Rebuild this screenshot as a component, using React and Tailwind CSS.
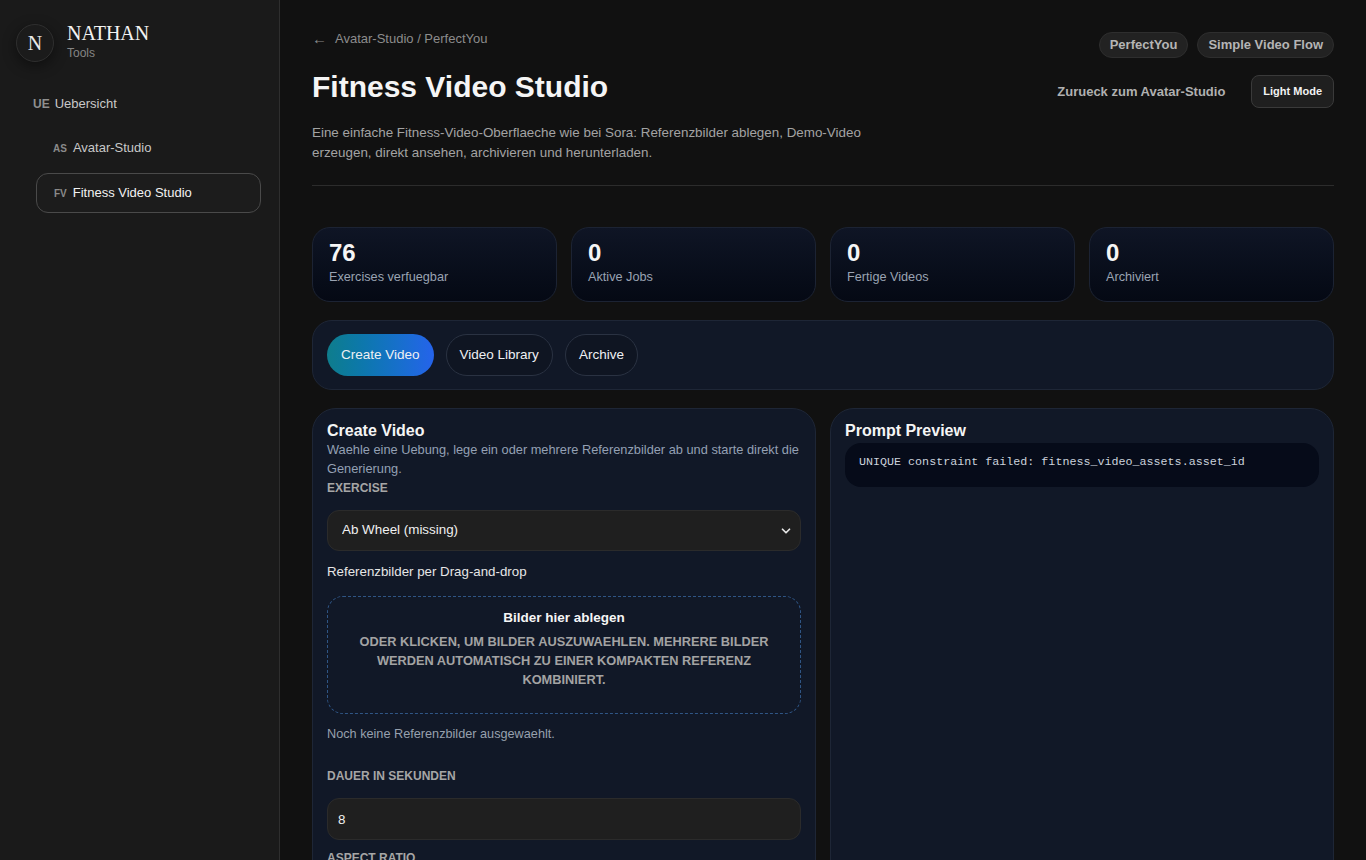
import React, { useState } from 'react';
import { ChevronDown } from 'lucide-react';
import clsx from 'clsx';

const stats = [
  { value: '76', label: 'Exercises verfuegbar' },
  { value: '0', label: 'Aktive Jobs' },
  { value: '0', label: 'Fertige Videos' },
  { value: '0', label: 'Archiviert' },
];

const tabs = ['Create Video', 'Video Library', 'Archive'];

function Sidebar() {
  return (
    <aside className="w-[280px] shrink-0 bg-[#1a1a1a] border-r border-[#2e2e2e] min-h-screen pl-4 pr-[18px] pt-5">
      {/* Brand */}
      <div className="flex items-center gap-[13px]">
        <div className="w-[38px] h-[38px] rounded-full border border-[#2f2f2f] bg-[#1b1b1b] shadow-[0_4px_14px_rgba(0,0,0,0.45)] flex items-center justify-center text-[20px] text-[#e8e8e8] font-['Liberation_Serif',serif] mt-1">
          N
        </div>
        <div>
          <div className="text-[20px] leading-6 text-[#f2f2f2] font-['Liberation_Serif',serif]">NATHAN</div>
          <div className="text-[12px] leading-4 text-[#858585]">Tools</div>
        </div>
      </div>

      {/* Nav */}
      <nav className="mt-[22px] flex flex-col gap-1">
        <div className="h-10 flex items-center gap-[5px] px-[17px] text-[13px] text-[#c8c8c8]">
          <span className="text-[12px] font-bold text-[#8f8f8f]">UE</span>
          Uebersicht
        </div>
        <div className="ml-5 flex flex-col gap-[5px]">
          <div className="h-10 flex items-center gap-[6px] px-[17px] text-[13px] text-[#c8c8c8]">
            <span className="text-[10px] font-bold text-[#8a8a8a]">AS</span>
            Avatar-Studio
          </div>
          <div className="h-10 flex items-center gap-[6px] px-[17px] text-[13px] text-[#f2f2f2] border border-[#4a4a4a] rounded-xl bg-[#1c1c1c]">
            <span className="text-[10px] font-bold text-[#8a8a8a]">FV</span>
            Fitness Video Studio
          </div>
        </div>
      </nav>
    </aside>
  );
}

function StatCard({ value, label }) {
  return (
    <div className="rounded-[18px] border border-[#1c2333] bg-linear-to-b from-[#0f1525] to-[#050914] px-4 pt-[11px] pb-[14px]">
      <div className="text-[24px] leading-7 font-bold text-[#f5f5f5]">{value}</div>
      <div className="text-[12.7px] leading-5 text-[#9aa3b2]">{label}</div>
    </div>
  );
}

function FieldLabel({ children, className }) {
  return (
    <div className={clsx('text-[12px] leading-4 font-bold uppercase text-[#a6a6a6]', className)}>
      {children}
    </div>
  );
}

function SelectBox({ value }) {
  return (
    <div className="relative mt-[14px]">
      <select className="w-full h-[41px] appearance-none rounded-xl bg-[#1f1f1f] border border-[#2b2b2b] pl-[14px] pr-8 text-[13.4px] text-[#f0f0f0] outline-none">
        <option>{value}</option>
      </select>
      <ChevronDown size={14} strokeWidth={3} className="absolute right-[8px] top-1/2 -translate-y-1/2 text-[#e5e5e5] pointer-events-none" />
    </div>
  );
}

function CreatePanel() {
  return (
    <section className="rounded-[24px] border border-[#1e2636] bg-[#111827] px-[14px] pt-3 pb-6">
      <h2 className="text-[16px] leading-[19px] font-bold text-[#f5f5f5]">Create Video</h2>
      <p className="text-[12.8px] leading-[19px] text-[#94a0b4]">
        Waehle eine Uebung, lege ein oder mehrere Referenzbilder ab und starte direkt die Generierung.
      </p>
      <FieldLabel className="mt-[2px]">Exercise</FieldLabel>
      <SelectBox value="Ab Wheel (missing)" />

      <div className="mt-[11px] text-[13.3px] leading-5 text-[#e6e6e6]">Referenzbilder per Drag-and-drop</div>
      <div className="mt-[14px] rounded-2xl border border-dashed border-[#2f5585] px-6 pt-[11px] pb-6 text-center">
        <div className="text-[13.5px] leading-5 font-bold text-[#f5f5f5]">Bilder hier ablegen</div>
        <div className="mt-1 text-[12.8px] leading-[19px] font-bold uppercase text-[#a3a3a3]">
          Oder klicken, um Bilder auszuwaehlen. Mehrere Bilder werden automatisch zu einer kompakten Referenz kombiniert.
        </div>
      </div>
      <div className="mt-[10px] text-[12.7px] leading-5 text-[#97a0ae]">Noch keine Referenzbilder ausgewaehlt.</div>

      <FieldLabel className="mt-6">Dauer in Sekunden</FieldLabel>
      <input
        defaultValue="8"
        className="mt-[14px] w-full h-[42px] rounded-xl bg-[#1f1f1f] border border-[#2b2b2b] px-[10px] text-[13.4px] text-[#f0f0f0] outline-none"
      />

      <FieldLabel className="mt-[10px]">Aspect Ratio</FieldLabel>
      <SelectBox value="9:16 (Hochformat)" />

      <button className="mt-5 w-full h-[42px] rounded-full bg-linear-to-r from-[#0f7d8c] to-[#2563eb] text-[13.5px] font-semibold text-white">
        Video generieren
      </button>
    </section>
  );
}

function PreviewPanel() {
  return (
    <section className="rounded-[24px] border border-[#1e2636] bg-[#111827] px-[14px] pt-3 pb-6">
      <h2 className="text-[16px] leading-[19px] font-bold text-[#f5f5f5]">Prompt Preview</h2>
      <pre className="mt-[3px] rounded-2xl bg-[#060b19] px-[14px] pt-[11px] pb-[17px] text-[11.7px] leading-4 text-[#cbd2dc] font-['Liberation_Mono',monospace] whitespace-pre-wrap">
        UNIQUE constraint failed: fitness_video_assets.asset_id
      </pre>
    </section>
  );
}

export default function App() {
  const [tab, setTab] = useState('Create Video');

  return (
    <div className="flex min-h-screen bg-[#111111] font-['Liberation_Sans',Arial,sans-serif]">
      <Sidebar />

      <main className="flex-1 min-w-0 px-8 pt-7 pb-10">
        {/* Header */}
        <header className="flex items-start justify-between border-b border-[#2c2c2c] pb-[22px]">
          <div>
            <div className="mt-px flex items-center gap-2 text-[13px] leading-5 text-[#8c8c8c]">
              <span className="text-[15px]">←</span>
              Avatar-Studio / PerfectYou
            </div>
            <h1 className="mt-5 text-[30px] leading-9 font-bold text-[#f5f5f5]">Fitness Video Studio</h1>
            <p className="mt-[18px] max-w-[580px] text-[13.4px] leading-5 text-[#a3a3a3]">
              Eine einfache Fitness-Video-Oberflaeche wie bei Sora: Referenzbilder ablegen, Demo-Video erzeugen, direkt ansehen, archivieren und herunterladen.
            </p>
          </div>
          <div className="flex flex-col items-end">
            <div className="mt-1 flex items-center gap-[9px]">
              <span className="h-[26px] px-[10px] flex items-center rounded-full bg-[#222222] border border-[#2e2e2e] text-[13px] font-semibold text-[#b5b5b5]">PerfectYou</span>
              <span className="h-[26px] px-[10px] flex items-center rounded-full bg-[#222222] border border-[#2e2e2e] text-[13px] font-semibold text-[#b5b5b5]">Simple Video Flow</span>
            </div>
            <div className="mt-[17px] flex items-center gap-[26px]">
              <span className="text-[13px] font-semibold text-[#b0b0b0]">Zurueck zum Avatar-Studio</span>
              <button className="h-[33px] px-[11px] rounded-lg bg-[#1f1f1f] border border-[#3a3a3a] text-[11px] font-bold text-[#f2f2f2]">
                Light Mode
              </button>
            </div>
          </div>
        </header>

        <div className="mt-[41px] flex flex-col gap-[18px]">
          {/* Stats */}
          <div className="grid grid-cols-4 gap-[14px]">
            {stats.map(s => <StatCard key={s.label} {...s} />)}
          </div>

          {/* Tabs */}
          <div className="rounded-[20px] border border-[#1e2636] bg-[#111827] px-[14px] py-[13px] flex items-center gap-3">
            {tabs.map(t => (
              <button
                key={t}
                onClick={() => setTab(t)}
                className={clsx(
                  'h-[42px] rounded-full text-[13.5px] text-[#eef0f3]',
                  tab === t
                    ? 'px-[14px] bg-linear-to-r from-[#0f7d8c] to-[#2563eb]'
                    : 'px-[13px] border border-[#2a3242] bg-[#0f1522]'
                )}
              >
                {t}
              </button>
            ))}
          </div>

          {/* Panels */}
          <div className="grid grid-cols-2 gap-[14px]">
            <CreatePanel />
            <PreviewPanel />
          </div>
        </div>
      </main>
    </div>
  );
}
